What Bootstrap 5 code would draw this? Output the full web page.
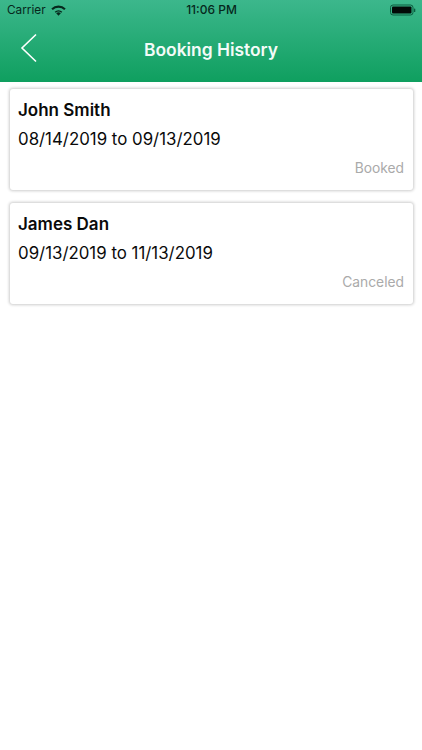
<!DOCTYPE html>
<html lang="en">
<head>
<meta charset="utf-8">
<title>Booking History</title>
<link href="https://cdn.jsdelivr.net/npm/bootstrap@5.3.0/dist/css/bootstrap.min.css" rel="stylesheet">
<style>
html, body { height: 100%; }
body { font-family: Inter, "Liberation Sans", sans-serif; background: #fff; color: #0a0a0a; overflow: hidden; }
.app-head { height: 82px; background: linear-gradient(180deg, #3cb78c 0%, #0f9f5f 100%); }
.status-row { height: 20px; padding: 0 6px 0 7px; font-size: 12px; line-height: 20px; color: #06281c; }
.status-side { flex: 1 1 0; }
.left-side { column-gap: 5px; }
.clock { font-weight: 500; }
.carrier { font-size: 11.8px; }
.title-row { height: 62px; padding-bottom: 2px; }
.back-btn { position: absolute; left: 20px; top: 13px; width: 18px; height: 30px; padding: 0; border: 0; background: none; line-height: 0; }
.page-title { font-size: 17.4px; font-weight: 600; color: #f4fbf8; line-height: 1; }
.booking-list { padding: 7px 9.5px 0 9.5px; gap: 13.5px; }
.booking-card { height: 100.5px; border: 0; border-radius: 3px; box-shadow: 0 0 3px 1px rgba(0,0,0,.2); padding: 12px 8.5px 0 8.5px; }
.guest { font-size: 17px; font-weight: 600; line-height: 19px; margin: 0; }
.dates { font-size: 16.85px; line-height: 20px; margin: 9px 0 0; font-weight: 400; }
.state { font-size: 13.8px; line-height: 17px; color: #aaa; margin-top: 11px; text-align: right; }
</style>
</head>
<body>
<header class="app-head">
  <div class="status-row d-flex align-items-center">
    <div class="status-side left-side d-flex align-items-center">
      <span class="carrier">Carrier</span>
      <svg width="15" height="11" viewBox="0 0 15 11" aria-hidden="true"><path d="M7.5 10.8 5.2 8.3a3.3 3.3 0 0 1 4.6 0Z" fill="#06281c"/><path d="M3.7 6.7a5.5 5.5 0 0 1 7.6 0L10.3 7.8a4 4 0 0 0-5.6 0Z" fill="#06281c"/><path d="M.3 3.4a10.2 10.2 0 0 1 14.4 0L13.2 5.1a8 8 0 0 0-11.4 0Z" fill="#06281c"/></svg>
    </div>
    <span class="clock">11:06 PM</span>
    <div class="status-side d-flex justify-content-end">
      <svg width="26" height="12" viewBox="0 0 26 12" aria-hidden="true"><rect x=".5" y="1" width="22.5" height="10" rx="2.5" fill="none" stroke="#0b5c3f"/><rect x="2" y="2.5" width="19.5" height="7" rx="1" fill="#020a07"/><rect x="24" y="4.5" width="1.3" height="3.5" rx=".6" fill="#0b5c3f"/></svg>
    </div>
  </div>
  <div class="title-row position-relative d-flex align-items-center justify-content-center">
    <button class="back-btn" type="button" aria-label="Back">
      <svg width="18" height="30" viewBox="0 0 18 30" aria-hidden="true"><path d="M16 1.5 2 15l14 13.5" fill="none" stroke="#fff" stroke-width="1.6"/></svg>
    </button>
    <h1 class="page-title m-0">Booking History</h1>
  </div>
</header>
<main class="booking-list d-flex flex-column">
  <article class="card booking-card">
    <p class="guest">John Smith</p>
    <p class="dates">08/14/2019 to 09/13/2019</p>
    <div class="state">Booked</div>
  </article>
  <article class="card booking-card">
    <p class="guest">James Dan</p>
    <p class="dates">09/13/2019 to 11/13/2019</p>
    <div class="state">Canceled</div>
  </article>
</main>
<script src="https://cdn.jsdelivr.net/npm/bootstrap@5.3.0/dist/js/bootstrap.bundle.min.js"></script>
</body>
</html>
